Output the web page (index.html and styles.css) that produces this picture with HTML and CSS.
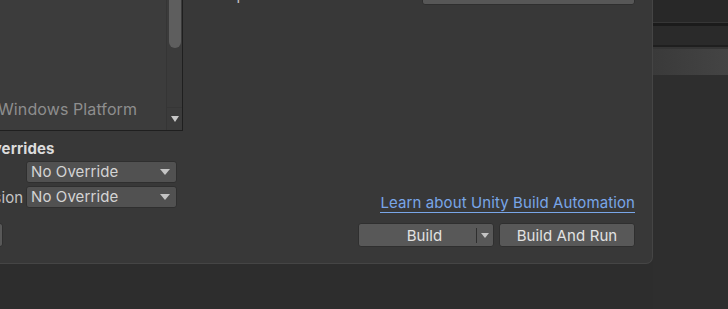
FILE: index.html
```html
<!DOCTYPE html>
<html lang="en">
<head>
  <meta charset="UTF-8">
  <title>Build Settings</title>
  <link rel="stylesheet" href="styles.css">
</head>
<body>
  <div class="screen">
    <div class="dialog">
      <div class="left-col">
        <div class="platforms">
          <div class="platform-list">
            <div class="platform"><span class="platform-icon"></span>Windows Platform</div>
          </div>
          <div class="scrollbar">
            <div class="thumb"></div>
            <div class="scroll-arrow"></div>
          </div>
        </div>
        <div class="overrides">
          <div class="section-title">Asset Import Overrides</div>
          <div class="field-row">
            <span class="field-label">Max Texture Size</span>
            <div class="select">No Override<span class="caret"></span></div>
          </div>
          <div class="field-row">
            <span class="field-label">Texture Compression</span>
            <div class="select">No Override<span class="caret"></span></div>
          </div>
        </div>
        <div class="left-footer">
          <button class="btn player-btn">Player Settings...</button>
        </div>
      </div>
      <div class="main-col">
        <div class="setting-row">
          <span class="setting-label">Compression Method</span>
          <div class="select wide-select">Default<span class="caret"></span></div>
        </div>
        <div class="spacer"></div>
        <div class="link-row">
          <a class="learn-link">Learn about Unity Build Automation</a>
        </div>
        <div class="actions">
          <button class="btn split-btn">
            <span class="split-main">Build</span>
            <span class="split-sep"></span>
            <span class="split-arrow"><span class="caret small"></span></span>
          </button>
          <button class="btn">Build And Run</button>
        </div>
      </div>
    </div>
    <div class="side">
      <div class="band band-top"></div>
      <div class="band band-line-a"></div>
      <div class="band band-mid"></div>
      <div class="band band-line-b"></div>
      <div class="band band-tab"></div>
      <div class="band band-rest"></div>
    </div>
  </div>
</body>
</html>
```

FILE: styles.css
```css
body {
  margin: 0;
  background: #2d2d2d;
  font-family: 'Inter', 'Noto Sans', sans-serif;
  font-size: 15px;
  letter-spacing: 0.1px;
  color: #d2d2d2;
  overflow: hidden;
}
.screen {
  display: flex;
  height: 309px;
}
.dialog {
  width: 652px;
  height: 263px;
  background: #383838;
  border-right: 1px solid #454545;
  border-bottom: 1px solid #454545;
  border-bottom-right-radius: 7px;
  display: flex;
  overflow: hidden;
  flex-shrink: 0;
}
.left-col {
  width: 303px;
  margin-left: -120px;
  display: flex;
  flex-direction: column;
  flex-shrink: 0;
}
.platforms {
  height: 200px;
  margin-top: -69px;
  display: flex;
  background: #3c3c3c;
  border-right: 1px solid #1f1f1f;
  border-bottom: 1px solid #1f1f1f;
  box-sizing: border-box;
}
.platform-list {
  flex: 1;
  display: flex;
  flex-direction: column;
  justify-content: flex-end;
  padding-bottom: 11px;
}
.platform {
  display: flex;
  align-items: center;
  font-size: 16px;
  color: #8e8e8e;
  height: 20px;
}
.platform-icon {
  width: 32px;
  height: 20px;
  margin-left: 77px;
  margin-right: 9px;
}
.scrollbar {
  width: 15px;
  border-left: 1px solid #353535;
  background: #3b3b3b;
  display: flex;
  flex-direction: column;
  justify-content: space-between;
  align-items: center;
}
.thumb {
  width: 12px;
  height: 117px;
  background: #5e5e5e;
  border-radius: 0 0 6px 6px;
}
.scroll-arrow {
  width: 100%;
  height: 22px;
  border-top: 1px solid #363636;
  display: flex;
  align-items: center;
  justify-content: center;
}
.scroll-arrow::after {
  content: '';
  border-left: 4px solid transparent;
  border-right: 4px solid transparent;
  border-top: 6px solid #c8c8c8;
}
.overrides {
  padding-top: 8px;
}
.section-title {
  font-weight: 700;
  color: #dcdcdc;
  height: 20px;
  line-height: 20px;
  margin-bottom: 2px;
  padding-left: 2px;
}
.field-row {
  display: flex;
  align-items: center;
  margin-bottom: 3px;
}
.field-label {
  width: 156px;
  margin-left: -10px;
  color: #c4c4c4;
  white-space: nowrap;
}
.select {
  position: relative;
  height: 22px;
  box-sizing: border-box;
  background: #515151;
  border: 1px solid #2f2f2f;
  border-radius: 3px;
  color: #d4d4d4;
  line-height: 20px;
  padding-left: 4px;
  display: flex;
  align-items: center;
  justify-content: space-between;
}
.field-row .select {
  width: 151px;
}
.caret {
  border-left: 5px solid transparent;
  border-right: 5px solid transparent;
  border-top: 6px solid #c4c4c4;
  margin-right: 6px;
}
.caret.small {
  border-left-width: 4px;
  border-right-width: 4px;
  border-top-width: 5px;
  margin: 0;
}
.left-footer {
  margin-top: 12px;
}
.btn {
  height: 24px;
  box-sizing: border-box;
  background: #585858;
  border: 1px solid #2f2f2f;
  border-radius: 3px;
  color: #e2e2e2;
  font-family: 'Inter', 'Noto Sans', sans-serif;
  font-size: 15px;
  letter-spacing: 0.1px;
  padding: 0;
}
.player-btn {
  width: 143px;
  margin-left: -20px;
  white-space: nowrap;
  overflow: hidden;
}
.main-col {
  flex: 1;
  display: flex;
  flex-direction: column;
  padding-right: 17px;
  padding-bottom: 16px;
}
.setting-row {
  display: flex;
  align-items: flex-end;
  justify-content: space-between;
  margin-top: -17px;
  height: 22px;
  padding-left: 20px;
}
.setting-label {
  color: #c4c4c4;
  line-height: 16px;
  margin-bottom: 2px;
}
.wide-select {
  width: 213px;
  background: #575757;
}
.spacer {
  flex: 1;
}
.link-row {
  display: flex;
  justify-content: flex-end;
  margin-bottom: 10px;
}
.learn-link {
  color: #79a6e8;
  border-bottom: 1px solid #79a6e8;
  line-height: 17px;
  padding-bottom: 1px;
  cursor: pointer;
}
.actions {
  display: flex;
  justify-content: flex-end;
  gap: 5px;
}
.actions .btn {
  width: 136px;
}
.split-btn {
  display: flex;
  align-items: center;
}
.split-main {
  flex: 1;
  padding-left: 14px;
}
.split-sep {
  width: 1px;
  height: 15px;
  background: #2f2f2f;
}
.split-arrow {
  width: 16px;
  display: flex;
  justify-content: center;
}
.side {
  flex: 1;
  display: flex;
  flex-direction: column;
}
.band-top {
  height: 22px;
  background: #282828;
}
.band-line-a {
  height: 4px;
  background: #1b1b1b;
  border-top: 1px solid #363636;
  box-sizing: border-box;
}
.band-mid {
  height: 19px;
  background: #2a2a2a;
}
.band-line-b {
  height: 4px;
  background: #353535;
  border-top: 2px solid #1f1f1f;
  box-sizing: border-box;
}
.band-tab {
  height: 26px;
  background: linear-gradient(90deg, #3a3a3a, #444444);
}
.band-rest {
  flex: 1;
  background: #2e2e2e;
}
```
